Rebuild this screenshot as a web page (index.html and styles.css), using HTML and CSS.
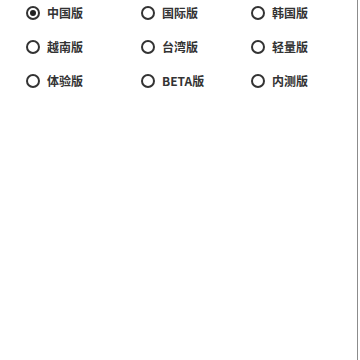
FILE: index.html
```html
<!DOCTYPE html>
<html lang="zh-CN">
<head>
<meta charset="utf-8">
<link rel="stylesheet" href="styles.css">
</head>
<body>
<div class="panel">
  <div class="options">
    <label class="opt"><span class="radio checked"></span><span class="txt">中国版</span></label>
    <label class="opt"><span class="radio"></span><span class="txt">国际版</span></label>
    <label class="opt"><span class="radio"></span><span class="txt">韩国版</span></label>
    <label class="opt"><span class="radio"></span><span class="txt">越南版</span></label>
    <label class="opt"><span class="radio"></span><span class="txt">台湾版</span></label>
    <label class="opt"><span class="radio"></span><span class="txt">轻量版</span></label>
    <label class="opt"><span class="radio"></span><span class="txt">体验版</span></label>
    <label class="opt"><span class="radio"></span><span class="txt">BETA版</span></label>
    <label class="opt"><span class="radio"></span><span class="txt">内测版</span></label>
  </div>
</div>
</body>
</html>
```
FILE: styles.css
```css
html, body {
  margin: 0;
  padding: 0;
  background: #fff;
}
.panel {
  width: 357px;
  height: 360px;
  border-right: 1px solid #8c8c8c;
  box-sizing: content-box;
}
.options {
  display: grid;
  grid-template-columns: 115px 110px 1fr;
  grid-auto-rows: 25px;
  row-gap: 9px;
  padding-left: 26px;
}
.opt {
  display: flex;
  align-items: center;
  gap: 7px;
  font-family: "Noto Sans CJK SC", "Noto Sans", sans-serif;
  font-size: 12px;
  font-weight: 700;
  color: #333;
}
.radio {
  width: 10px;
  height: 10px;
  border: 2px solid #333;
  border-radius: 50%;
  position: relative;
  flex: none;
}
.radio.checked::after {
  content: "";
  position: absolute;
  left: 2px;
  top: 2px;
  width: 6px;
  height: 6px;
  border-radius: 50%;
  background: #222;
}
.txt {
  line-height: 1;
}
```
